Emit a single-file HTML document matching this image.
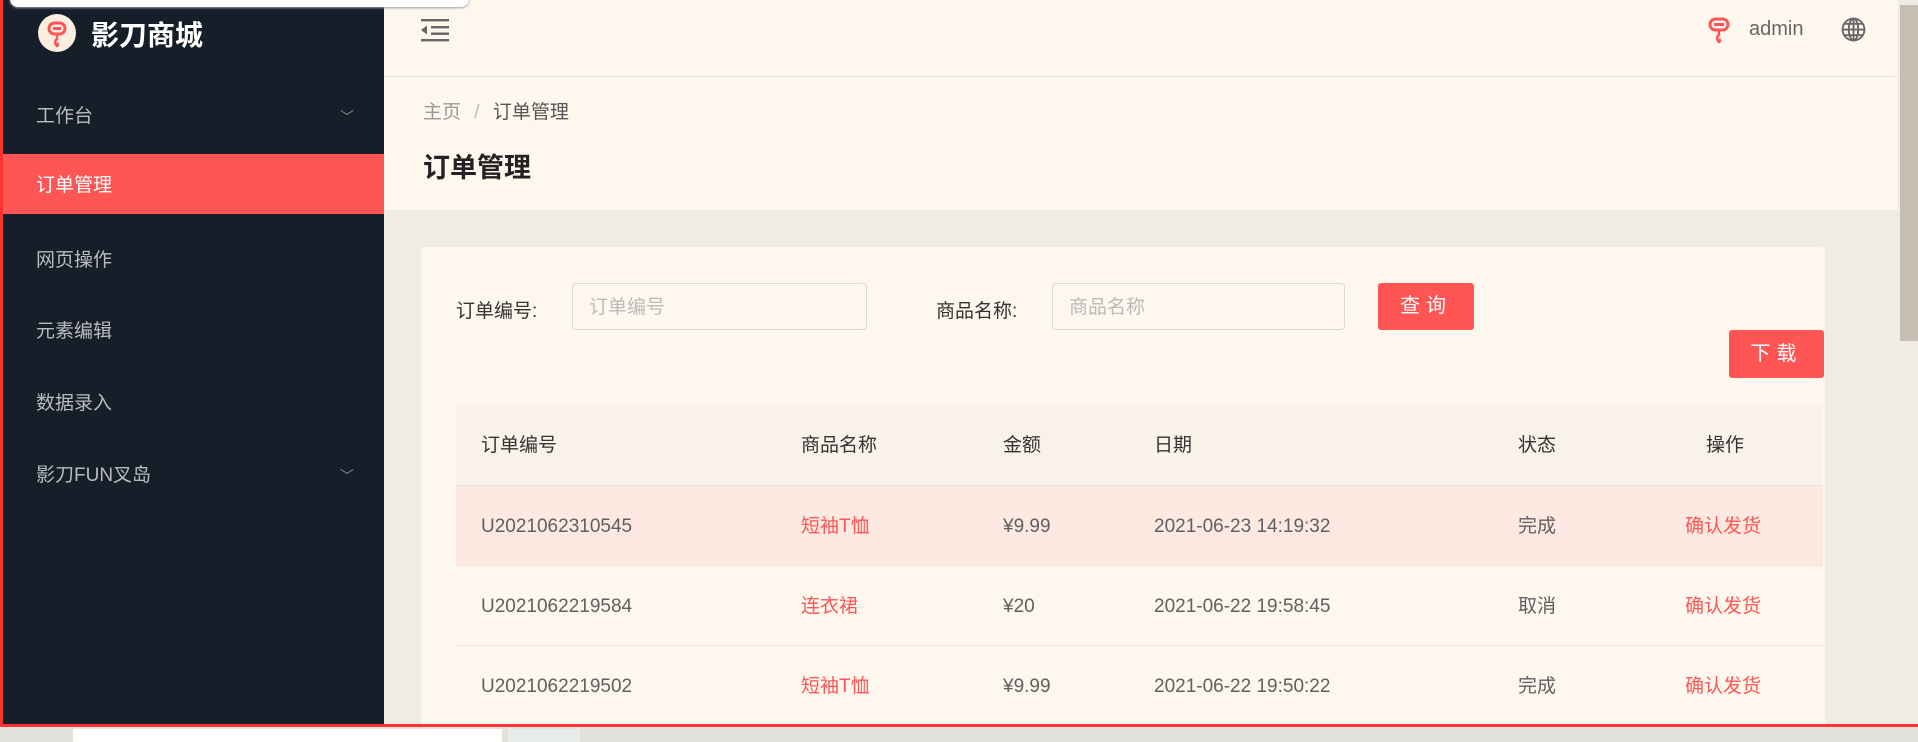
<!DOCTYPE html>
<html><head><meta charset="utf-8"><style>
*{margin:0;padding:0;box-sizing:border-box}
body{width:1918px;height:742px;overflow:hidden;background:#dfe3dc;font-family:"Liberation Sans","Noto Sans CJK SC",sans-serif;position:relative}
.win{position:absolute;left:0;top:0;width:1918px;height:727px;background:#f0ebe5;border-left:3px solid #ff3333;border-bottom:3px solid #ff3333;overflow:hidden}
.side{position:absolute;left:0;top:0;width:381px;height:724px;background:#161f29}
.logo{position:absolute;left:35px;top:14px;width:38px;height:38px;border-radius:50%;background:#fbeee0}
.brand{position:absolute;left:88px;top:14px;color:#fff;font-size:28px;font-weight:bold}
.mi{position:absolute;left:0;width:381px;height:60px;line-height:60px;padding-left:33px;color:#b9bcbf;font-size:19px}
.mi.act{background:#ff5555;color:#fff}
.chev{position:absolute;right:30px;top:0;font-size:14px;color:#888}
.head{position:absolute;left:381px;top:0;width:1514px;height:76px;background:#fef7ee;box-shadow:0 1px 3px rgba(0,0,0,.06)}
.bc{position:absolute;left:381px;top:77px;width:1514px;height:133px;background:#fef7ee}
.sb{position:absolute;left:1895px;top:0;width:20px;height:724px;background:#f0ebe5}
.sbt{position:absolute;left:1897px;top:5px;width:18px;height:336px;background:#c6bdb3}
.card{position:absolute;left:418px;top:247px;width:1404px;height:490px;background:#fef7ee;border-radius:4px}
.lbl{position:absolute;font-size:19px;color:#333}
.inp{position:absolute;height:47px;border:1px solid #dcd7d0;border-radius:4px;background:#fef7ee;font-size:19px;color:#bbb;padding-left:16px;line-height:47px}
.btn{position:absolute;background:#ff5555;color:#fff;font-size:20px;text-align:center;border-radius:3px;letter-spacing:6px}
.tbl{position:absolute;left:453px;top:405px;width:1367px}
.row{position:relative;height:80px;border-bottom:1px solid #ece5dc;font-size:19px;color:#606060}
.row span{position:absolute;top:0;line-height:82px}
.th{background:#f9f2e9;color:#333}
.hl{background:#fde9e1}
.red{color:#ff5555!important}
</style></head><body>
<div class="win">
 <div class="side">
  <div class="logo"><svg width="38" height="38" viewBox="0 0 38 38"><rect x="11" y="9" width="16" height="11" rx="5.5" fill="none" stroke="#ff5555" stroke-width="3"/><rect x="15" y="13" width="8" height="3" fill="#ff5555"/><path d="M19 21 v4 q-4 3 0 7 q2-1 0-3" fill="none" stroke="#ff5555" stroke-width="2.4"/></svg></div>
  <div class="brand">影刀商城</div>
  <div class="mi" style="top:87px">工作台<span class="chev">﹀</span></div>
  <div class="mi act" style="top:154px;line-height:64px">订单管理</div>
  <div class="mi" style="top:231px">网页操作</div>
  <div class="mi" style="top:302px">元素编辑</div>
  <div class="mi" style="top:374px">数据录入</div>
  <div class="mi" style="top:446px">影刀FUN叉岛<span class="chev">﹀</span></div>
 </div>
 <div class="head">
  <svg style="position:absolute;left:37px;top:18px" width="28" height="24" viewBox="0 0 28 24"><rect x="0" y="1" width="28" height="2.4" fill="#666"/><rect x="10" y="8" width="18" height="2.4" fill="#666"/><rect x="10" y="14.5" width="18" height="2.4" fill="#666"/><rect x="0" y="21" width="28" height="2.4" fill="#666"/><path d="M0 12 L6 7.5 V16.5Z" fill="#666"/></svg>
  <svg style="position:absolute;left:1323px;top:16px" width="24" height="28" viewBox="0 0 24 28"><rect x="3" y="3" width="18" height="11" rx="5.5" fill="none" stroke="#ff5555" stroke-width="3"/><rect x="7" y="7" width="10" height="3" fill="#ff5555"/><path d="M12 15 v4 q-4 3 0 7 q2-1 0-3" fill="none" stroke="#ff5555" stroke-width="2.4"/></svg>
  <div style="position:absolute;left:1365px;top:18px;font-size:20px;color:#666">admin</div>
  <svg style="position:absolute;left:1457px;top:17px" width="25" height="25" viewBox="0 0 24 24" fill="none" stroke="#666" stroke-width="1.8"><circle cx="12" cy="12" r="10.5"/><ellipse cx="12" cy="12" rx="4.5" ry="10.5"/><path d="M1.5 12h21M3 6.5h18M3 17.5h18M12 1.5v21"/></svg>
 </div>
 <div class="bc">
  <div style="position:absolute;left:39px;top:20px;font-size:19px;color:#999">主页 <span style="margin:0 8px;color:#bbb">/</span> <span style="color:#555">订单管理</span></div>
  <div style="position:absolute;left:39px;top:69px;font-size:27px;font-weight:bold;color:#222">订单管理</div>
 </div>
 <div class="card"></div>
 <div class="lbl" style="left:453px;top:296px">订单编号:</div>
 <div class="inp" style="left:569px;top:283px;width:295px">订单编号</div>
 <div class="lbl" style="left:933px;top:296px">商品名称:</div>
 <div class="inp" style="left:1049px;top:283px;width:293px">商品名称</div>
 <div class="btn" style="left:1375px;top:283px;width:96px;height:47px;line-height:47px">查询</div>
 <div class="btn" style="left:1726px;top:330px;width:95px;height:48px;line-height:48px">下载</div>
 <div class="tbl">
  <div class="row th" style="height:81px"><span style="left:25px">订单编号</span><span style="left:345px">商品名称</span><span style="left:547px">金额</span><span style="left:698px">日期</span><span style="left:1062px">状态</span><span style="left:1250px">操作</span></div>
  <div class="row hl"><span style="left:25px">U2021062310545</span><span class="red" style="left:345px">短袖T恤</span><span style="left:547px">¥9.99</span><span style="left:698px">2021-06-23 14:19:32</span><span style="left:1062px">完成</span><span class="red" style="left:1229px">确认发货</span></div>
  <div class="row"><span style="left:25px">U2021062219584</span><span class="red" style="left:345px">连衣裙</span><span style="left:547px">¥20</span><span style="left:698px">2021-06-22 19:58:45</span><span style="left:1062px">取消</span><span class="red" style="left:1229px">确认发货</span></div>
  <div class="row"><span style="left:25px">U2021062219502</span><span class="red" style="left:345px">短袖T恤</span><span style="left:547px">¥9.99</span><span style="left:698px">2021-06-22 19:50:22</span><span style="left:1062px">完成</span><span class="red" style="left:1229px">确认发货</span></div>
 </div>
 <div class="sb"></div><div class="sbt"></div>
</div>
<div style="position:absolute;left:10px;top:-8px;width:459px;height:15px;background:#fff;border-radius:0 0 8px 8px;box-shadow:0 1px 2px #99a"></div>
<div style="position:absolute;left:73px;top:729px;width:429px;height:13px;background:#fff"></div>
<div style="position:absolute;left:508px;top:729px;width:72px;height:13px;background:#e8ece8"></div>
</body></html>
